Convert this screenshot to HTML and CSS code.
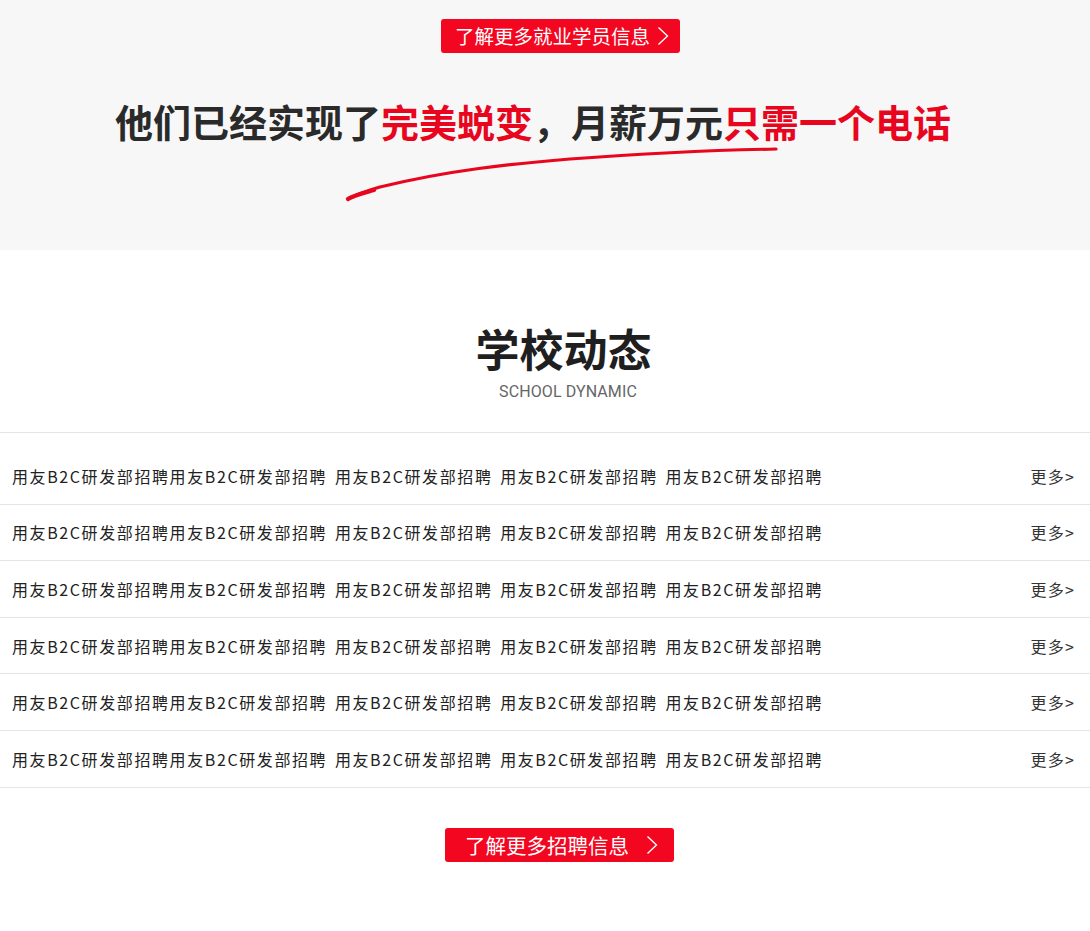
FILE: index.html
```html
<!DOCTYPE html>
<html lang="zh-CN">
<head>
<meta charset="utf-8">
<title>学校动态</title>
<link rel="stylesheet" href="styles.css">
</head>
<body>
<section class="hero">
  <a class="btn btn-top" href="#">了解更多就业学员信息<svg class="chev" viewBox="0 0 12 20" width="12" height="20"><polyline points="1.5,1.5 10.5,10 1.5,18.5" fill="none" stroke="#fff" stroke-width="1.4"/></svg></a>
  <h2 class="slogan">他们已经实现了<span class="red">完美蜕变</span>，月薪万元<span class="red">只需一个电话</span></h2>
  <svg class="swoosh" viewBox="0 0 445 65" width="445" height="65"><path d="M8,59 C14,55 24,52 40,47 C110,30 170,24 230,19 C310,13 380,10 436,9" fill="none" stroke="#e8061f" stroke-width="3.2" stroke-linecap="round"/><path d="M8,59 C12,56 20,54 34,50" fill="none" stroke="#e8061f" stroke-width="4.2" stroke-linecap="round"/></svg>
</section>
<section class="news">
  <h1 class="title">学校动态</h1>
  <p class="subtitle">SCHOOL DYNAMIC</p>
  <ul class="list">
    <li class="row"><span class="txt">用友B2C研发部招聘用友B2C研发部招聘 用友B2C研发部招聘 用友B2C研发部招聘 用友B2C研发部招聘</span><a class="more" href="#">更多&gt;</a></li>
    <li class="row"><span class="txt">用友B2C研发部招聘用友B2C研发部招聘 用友B2C研发部招聘 用友B2C研发部招聘 用友B2C研发部招聘</span><a class="more" href="#">更多&gt;</a></li>
    <li class="row"><span class="txt">用友B2C研发部招聘用友B2C研发部招聘 用友B2C研发部招聘 用友B2C研发部招聘 用友B2C研发部招聘</span><a class="more" href="#">更多&gt;</a></li>
    <li class="row"><span class="txt">用友B2C研发部招聘用友B2C研发部招聘 用友B2C研发部招聘 用友B2C研发部招聘 用友B2C研发部招聘</span><a class="more" href="#">更多&gt;</a></li>
    <li class="row"><span class="txt">用友B2C研发部招聘用友B2C研发部招聘 用友B2C研发部招聘 用友B2C研发部招聘 用友B2C研发部招聘</span><a class="more" href="#">更多&gt;</a></li>
    <li class="row"><span class="txt">用友B2C研发部招聘用友B2C研发部招聘 用友B2C研发部招聘 用友B2C研发部招聘 用友B2C研发部招聘</span><a class="more" href="#">更多&gt;</a></li>
  </ul>
  <a class="btn btn-bottom" href="#">了解更多招聘信息<svg class="chev" viewBox="0 0 12 20" width="12" height="20"><polyline points="1.5,1.5 10.5,10 1.5,18.5" fill="none" stroke="#fff" stroke-width="1.4"/></svg></a>
</section>
</body>
</html>
```
FILE: styles.css
```css
html, body {
  margin: 0;
  padding: 0;
  background: #fff;
  font-family: "Noto Sans CJK SC", "Noto Sans", sans-serif;
  overflow-x: hidden;
}

.hero {
  position: relative;
  height: 250px;
  box-sizing: border-box;
  padding-top: 19px;
  background: #f7f7f7;
  display: flex;
  flex-direction: column;
  align-items: center;
}

.btn {
  display: flex;
  align-items: center;
  height: 34px;
  box-sizing: border-box;
  background: #f3061f;
  color: #fff;
  text-decoration: none;
  border-radius: 3px;
  font-size: 19.5px;
  line-height: 34px;
  white-space: nowrap;
}

.btn-top {
  width: 239px;
  padding-left: 14px;
  margin-left: 31px;
}

.btn-top .chev {
  margin-left: 7px;
}

.slogan {
  margin: 49px 24px 0 0;
  font-size: 38px;
  line-height: 38px;
  font-weight: 700;
  color: #2a2a2a;
  white-space: nowrap;
  letter-spacing: 0;
}

.red {
  color: #e8061f;
}

.swoosh {
  position: absolute;
  left: 340px;
  top: 140px;
}

.news {
  display: flex;
  flex-direction: column;
  align-items: center;
  padding-top: 73px;
  padding-bottom: 70px;
}

.title {
  margin: 0 0 0 37px;
  font-size: 44px;
  line-height: 50px;
  font-weight: 700;
  color: #1f1f1f;
}

.subtitle {
  margin: 9px 0 0 46px;
  font-family: "Roboto", "Liberation Sans", sans-serif;
  font-size: 16px;
  line-height: 20px;
  color: #666;
  letter-spacing: 0.1px;
}

.list {
  list-style: none;
  margin: 30px 0 0 0;
  padding: 15px 0 0 0;
  width: 100%;
  border-top: 1px solid #e5e5e5;
}

.row {
  display: flex;
  justify-content: space-between;
  align-items: center;
  height: 55.6px;
  padding: 0 15px 0 12px;
  border-bottom: 1px solid #e5e5e5;
  font-size: 16px;
  color: #222;
}

.txt {
  letter-spacing: 1.6px;
  word-spacing: 2.5px;
  white-space: pre;
}

.more {
  color: #333;
  text-decoration: none;
  font-size: 16px;
  letter-spacing: 1.2px;
}

.btn-bottom {
  margin-top: 40px;
  margin-left: 29px;
  width: 229px;
  padding-left: 20px;
  font-size: 20.5px;
}

.btn-bottom .chev {
  margin-left: 17px;
}
```
